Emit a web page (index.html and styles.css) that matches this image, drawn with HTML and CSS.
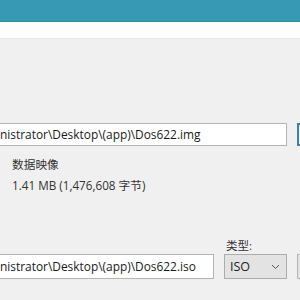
FILE: index.html
```html
<!DOCTYPE html>
<html lang="zh-CN">
<head>
    <meta charset="UTF-8">
    <title>转换映像文件</title>
    <link rel="stylesheet" href="styles.css">
</head>
<body>
    <div class="titlebar"></div>
    <div class="toolbar"></div>

    <div class="content">
        <div class="field-row source-row">
            <div class="path-box">nistrator\Desktop\(app)\Dos622.img</div>
            <div class="side-button primary"></div>
        </div>

        <div class="file-info">
            <div class="info-line">数据映像</div>
            <div class="info-line">1.41 MB (1,476,608 字节)</div>
        </div>

        <div class="field-row target-row">
            <div class="path-box short">nistrator\Desktop\(app)\Dos622.iso</div>
            <div class="type-group">
                <div class="type-label">类型:</div>
                <div class="type-select">
                    <span>ISO</span>
                    <svg class="chevron" width="9" height="6" viewBox="0 0 9 6">
                        <path d="M1 1 L4.5 4.5 L8 1" fill="none" stroke="#555" stroke-width="1"/>
                    </svg>
                </div>
            </div>
            <div class="side-button"></div>
        </div>
    </div>
</body>
</html>
```

FILE: styles.css
```css
body {
    margin: 0;
    padding: 0;
    width: 300px;
    height: 300px;
    overflow: hidden;
    background-color: #f0f0f0;
    font-family: "Open Sans", "Noto Sans CJK SC", sans-serif;
    color: #222;
}

.titlebar {
    height: 21px;
    background-color: #3799b4;
    border-bottom: 1px solid #2f8aa3;
}

.toolbar {
    height: 16px;
    background-color: #fcfdfc;
    border-bottom: 1px solid #e6e6e6;
}

.content {
    padding-top: 84px;
}

.field-row {
    display: flex;
    align-items: flex-end;
}

.path-box {
    flex-shrink: 0;
    box-sizing: border-box;
    width: 287px;
    height: 23px;
    background-color: #fff;
    border: 1px solid #b5b5b5;
    border-left: none;
    font-size: 11.9px;
    line-height: 21px;
    white-space: nowrap;
    overflow: hidden;
    color: #1a1a1a;
}

.path-box.short {
    width: 214px;
    height: 25px;
    line-height: 23px;
}

.side-button {
    flex-shrink: 0;
    box-sizing: border-box;
    width: 10px;
    height: 25px;
    margin-left: 10px;
    border: 1px solid #b8b8b8;
    border-right: none;
    background-color: #e1e1e1;
}

.side-button.primary {
    height: 23px;
    border: 2px solid #3d7fae;
    border-right: none;
    background-color: #e5f1fb;
}

.file-info {
    padding: 8px 0 0 12px;
    font-size: 11.7px;
    color: #333;
}

.info-line {
    height: 21px;
    line-height: 21px;
}

.target-row {
    margin-top: 42px;
}

.type-group {
    flex-shrink: 0;
    margin-left: 10px;
    display: flex;
    flex-direction: column;
}

.type-label {
    font-size: 11.5px;
    line-height: 15px;
    padding-left: 2px;
    margin-bottom: 1px;
    color: #333;
}

.type-select {
    box-sizing: border-box;
    width: 63px;
    height: 25px;
    display: flex;
    align-items: center;
    justify-content: space-between;
    padding: 0 6px 0 5px;
    background-color: #e3e3e3;
    border: 1px solid #adadad;
    font-size: 12.5px;
    color: #222;
}

.chevron {
    display: block;
}
```
